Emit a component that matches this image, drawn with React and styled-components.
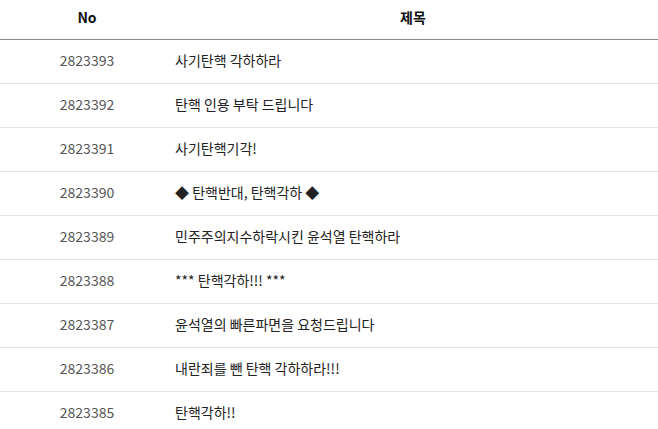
import styled, { createGlobalStyle } from "styled-components";

const GlobalStyle = createGlobalStyle`
  body {
    margin: 0;
    background: #fff;
    font-family: "Noto Sans CJK KR", "Noto Sans", sans-serif;
  }
`;

const Table = styled.div`
  width: 658px;
  display: flex;
  flex-direction: column;
  font-size: 14px;
`;

const HeadRow = styled.div`
  display: grid;
  grid-template-columns: 174px 1fr;
  box-sizing: border-box;
  height: 40px;
  padding-bottom: 5px;
  align-items: center;
  border-bottom: 1px solid #8a8a8a;
  font-weight: 700;
  color: #111;
  .no {
    text-align: center;
  }
  .title {
    text-align: center;
    padding-right: 6px;
  }
`;

const Row = styled.div`
  display: grid;
  grid-template-columns: 174px 1fr;
  box-sizing: border-box;
  height: 44px;
  padding-bottom: 3px;
  align-items: center;
  border-bottom: 1px solid #e6e6e6;
  .no {
    text-align: center;
    color: #555;
  }
  .title {
    padding-left: 1px;
    color: #222;
  }
`;

const posts = [
  { no: 2823393, title: "사기탄핵 각하하라" },
  { no: 2823392, title: "탄핵 인용 부탁 드립니다" },
  { no: 2823391, title: "사기탄핵기각!" },
  { no: 2823390, title: "◆ 탄핵반대, 탄핵각하 ◆" },
  { no: 2823389, title: "민주주의지수하락시킨 윤석열 탄핵하라" },
  { no: 2823388, title: "*** 탄핵각하!!! ***" },
  { no: 2823387, title: "윤석열의 빠른파면을 요청드립니다" },
  { no: 2823386, title: "내란죄를 뺀 탄핵 각하하라!!!" },
  { no: 2823385, title: "탄핵각하!!" },
];

const App = () => {
  return (
    <>
      <GlobalStyle />
      <Table>
        <HeadRow>
          <div className="no">No</div>
          <div className="title">제목</div>
        </HeadRow>
        {posts.map((p) => (
          <Row key={p.no}>
            <div className="no">{p.no}</div>
            <div className="title">{p.title}</div>
          </Row>
        ))}
      </Table>
    </>
  );
};

export default App;
